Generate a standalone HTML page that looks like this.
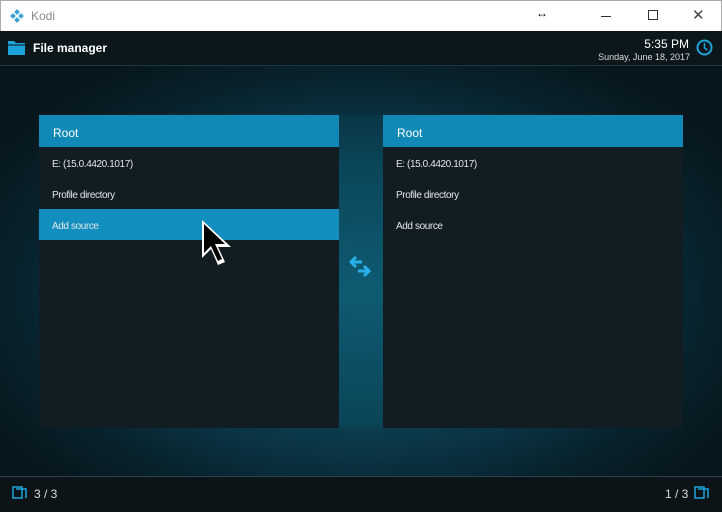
<!DOCTYPE html>
<html><head><style>
*{margin:0;padding:0;box-sizing:border-box}
body{width:722px;height:512px;overflow:hidden;font-family:"Liberation Sans",sans-serif;position:relative;background:#0a1419}
.tb{position:absolute;left:0;top:0;width:722px;height:31px;background:#fff;border:1px solid #aaa;border-bottom:none}
.tb .t{position:absolute;left:30px;top:8px;font-size:12px;color:#888}
.main{position:absolute;left:0;top:31px;width:722px;height:481px;background:radial-gradient(ellipse 430px 270px at 361px 260px,#0e5a70 0%,#0b4254 45%,#08222c 80%,#07161c 100%)}
.top{position:absolute;left:0;top:31px;width:722px;height:35px;background:#0c171c;border-bottom:1px solid #1c3540}
.foot{position:absolute;left:0;top:476px;width:722px;height:36px;background:#0c1418;border-top:1px solid #2a4450}
.panel{position:absolute;top:115px;width:300px;height:313px;background:#121d23}
.hd{height:32px;background:#1189b6;color:#fff;font-size:12px;padding:11px 14px}
.it{height:31px;color:#e0e6e8;font-size:10px;padding:12px 13px;letter-spacing:-0.4px}
.sel{background:#138fbf}
.mid{position:absolute;left:339px;top:115px;width:44px;height:313px;background:rgba(20,110,140,0.12)}
</style></head><body>
<div class="main"></div>
<div class="mid"></div>
<div class="tb">
<svg style="position:absolute;left:9px;top:8px" width="14" height="14" viewBox="0 0 14 14"><g fill="#3aa0d6"><rect x="5" y="1" width="4" height="4" transform="rotate(45 7 3)"/><rect x="1" y="5" width="4" height="4" transform="rotate(45 3 7)"/><rect x="9" y="5" width="4" height="4" transform="rotate(45 11 7)"/><rect x="5" y="9" width="4" height="4" transform="rotate(45 7 11)"/></g></svg>
<span class="t">Kodi</span>
<span style="position:absolute;left:535px;top:5px;font-size:12px;color:#000">↔</span>
<div style="position:absolute;left:600px;top:15px;width:10px;height:1px;background:#333"></div>
<div style="position:absolute;left:647px;top:9px;width:10px;height:10px;border:1px solid #333"></div>
<span style="position:absolute;left:691px;top:5px;font-size:15px;color:#444">✕</span>
</div>
<div class="top">
<svg style="position:absolute;left:8px;top:9px" width="17" height="15" viewBox="0 0 17 15"><path d="M0 1h6l2 2h9v12H0z" fill="#1ca3d9"/><path d="M0 5h17" stroke="#0c171c" stroke-width="1"/></svg>
<span style="position:absolute;left:33px;top:10px;font-size:12px;color:#fff;font-weight:bold">File manager</span>
<span style="position:absolute;right:33px;top:6px;font-size:12px;color:#fff">5:35 PM</span>
<span style="position:absolute;right:32px;top:21px;font-size:9px;color:#ddd">Sunday, June 18, 2017</span>
<svg style="position:absolute;left:696px;top:8px" width="17" height="17" viewBox="0 0 17 17"><circle cx="8.5" cy="8.5" r="7" fill="none" stroke="#1ca3d9" stroke-width="2"/><path d="M8.5 4v5l3 2" fill="none" stroke="#1ca3d9" stroke-width="1.6"/></svg>
</div>
<div class="panel" style="left:39px">
<div class="hd">Root</div>
<div class="it">E: (15.0.4420.1017)</div>
<div class="it">Profile directory</div>
<div class="it sel">Add source</div>
</div>
<div class="panel" style="left:383px">
<div class="hd">Root</div>
<div class="it">E: (15.0.4420.1017)</div>
<div class="it">Profile directory</div>
<div class="it">Add source</div>
</div>
<svg style="position:absolute;left:348px;top:256px" width="26" height="22" viewBox="0 0 26 22"><g fill="none" stroke="#2ab0e8" stroke-width="3"><path d="M14 6H3M8 1L3 6l5 5"/><path d="M10 15h11M16 10l5 5-5 5"/></g></svg>
<svg style="position:absolute;left:200px;top:219px" width="34" height="48" viewBox="0 0 34 48"><path d="M2 1v38l9-9 7 16 7-3-7-15h13z" fill="#fff"/><path d="M4 5v29l7-7 7 15 4-2-7-15h10z" fill="#000"/></svg>
<div class="foot">
<svg style="position:absolute;left:12px;top:9px" width="16" height="13" viewBox="0 0 16 13"><path d="M1 1h9v11H1z M4 3h10v9" fill="none" stroke="#1ca3d9" stroke-width="1.5"/></svg>
<span style="position:absolute;left:34px;top:10px;font-size:12px;color:#ddd">3 / 3</span>
<span style="position:absolute;left:665px;top:10px;font-size:12px;color:#ddd">1 / 3</span>
<svg style="position:absolute;left:694px;top:9px" width="16" height="13" viewBox="0 0 16 13"><path d="M1 1h9v11H1z M4 3h10v9" fill="none" stroke="#1ca3d9" stroke-width="1.5"/></svg>
</div>
</body></html>
